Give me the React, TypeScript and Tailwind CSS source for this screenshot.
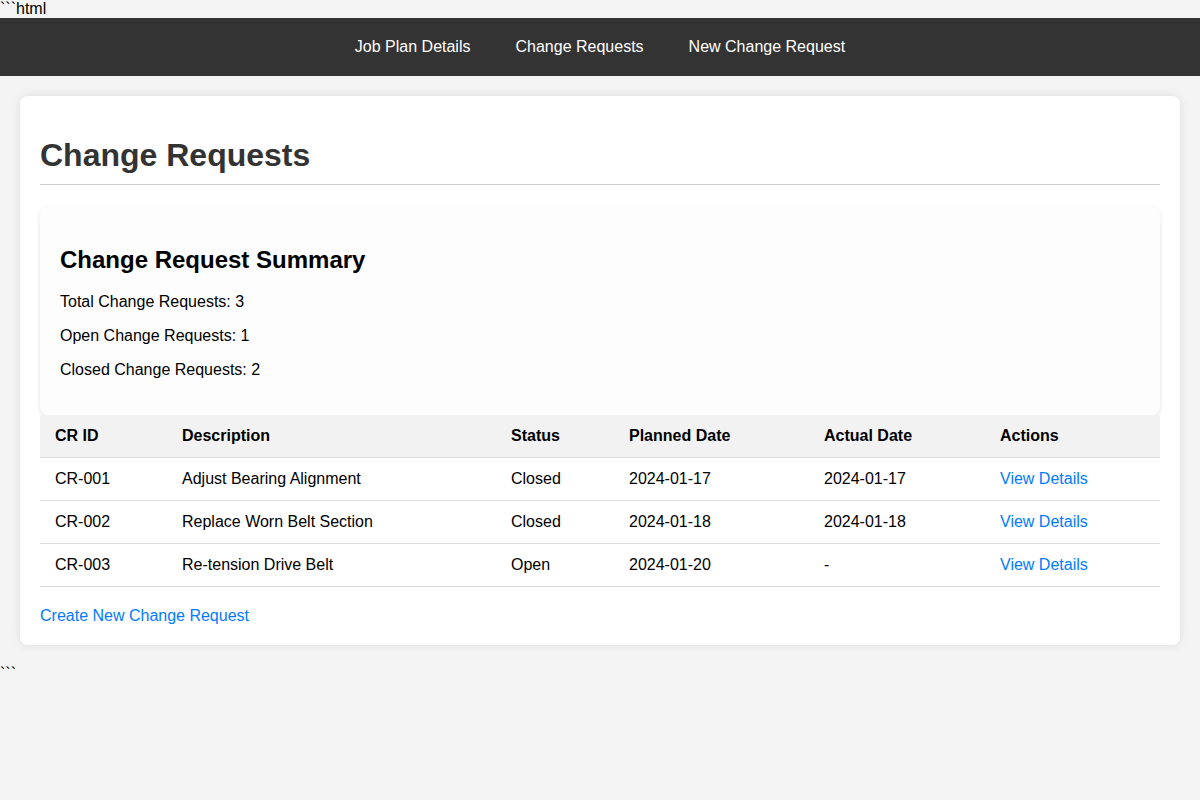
import React from "react";

const rows = [
  { id: "CR-001", desc: "Adjust Bearing Alignment", status: "Closed", planned: "2024-01-17", actual: "2024-01-17" },
  { id: "CR-002", desc: "Replace Worn Belt Section", status: "Closed", planned: "2024-01-18", actual: "2024-01-18" },
  { id: "CR-003", desc: "Re-tension Drive Belt", status: "Open", planned: "2024-01-20", actual: "-" },
];

export default function App() {
  return (
    <div className="min-h-[800px] bg-[#f4f4f4] text-black text-[16px] leading-[18px]" style={{ fontFamily: '"Liberation Sans", Arial, sans-serif' }}>
      <div className="h-[18px]">```html</div>
      <nav className="h-[58px] bg-[#333333] flex items-center justify-center gap-[45px] text-white">
        <a className="text-white">Job Plan Details</a>
        <a className="text-white">Change Requests</a>
        <a className="text-white">New Change Request</a>
      </nav>
      <div className="m-[20px] bg-white rounded-[8px] shadow-[0_0_10px_rgba(0,0,0,0.1)] p-[20px]">
        <h1 className="mt-[21px] mb-[22px] pb-[10px] border-b border-[#cccccc] text-[32px] leading-[37px] font-bold text-[#333333]">Change Requests</h1>
        <div className="bg-[#fdfdfd] rounded-[8px] shadow-[0_2px_5px_rgba(0,0,0,0.1)] px-[20px] pt-[20px] pb-[20px]">
          <h2 className="mt-[19px] mb-[19px] text-[24px] leading-[28px] font-bold">Change Request Summary</h2>
          <p className="mb-[16px]">Total Change Requests: 3</p>
          <p className="mb-[16px]">Open Change Requests: 1</p>
          <p className="mb-[16px]">Closed Change Requests: 2</p>
        </div>
        <table className="w-full border-collapse table-fixed">
          <colgroup>
            <col className="w-[127px]" />
            <col className="w-[329px]" />
            <col className="w-[118px]" />
            <col className="w-[195px]" />
            <col className="w-[176px]" />
            <col className="w-[175px]" />
          </colgroup>
          <thead>
            <tr className="bg-[#f2f2f2]">
              {["CR ID", "Description", "Status", "Planned Date", "Actual Date", "Actions"].map((h) => (
                <th key={h} className="text-left font-bold px-[15px] py-[12px] border-b border-[#dddddd]">{h}</th>
              ))}
            </tr>
          </thead>
          <tbody>
            {rows.map((r) => (
              <tr key={r.id}>
                <td className="px-[15px] py-[12px] border-b border-[#dddddd]">{r.id}</td>
                <td className="px-[15px] py-[12px] border-b border-[#dddddd]">{r.desc}</td>
                <td className="px-[15px] py-[12px] border-b border-[#dddddd]">{r.status}</td>
                <td className="px-[15px] py-[12px] border-b border-[#dddddd]">{r.planned}</td>
                <td className="px-[15px] py-[12px] border-b border-[#dddddd]">{r.actual}</td>
                <td className="px-[15px] py-[12px] border-b border-[#dddddd]"><a className="text-[#007bff]">View Details</a></td>
              </tr>
            ))}
          </tbody>
        </table>
        <div className="mt-[20px]"><a className="text-[#007bff]">Create New Change Request</a></div>
      </div>
      <div>```</div>
    </div>
  );
}
